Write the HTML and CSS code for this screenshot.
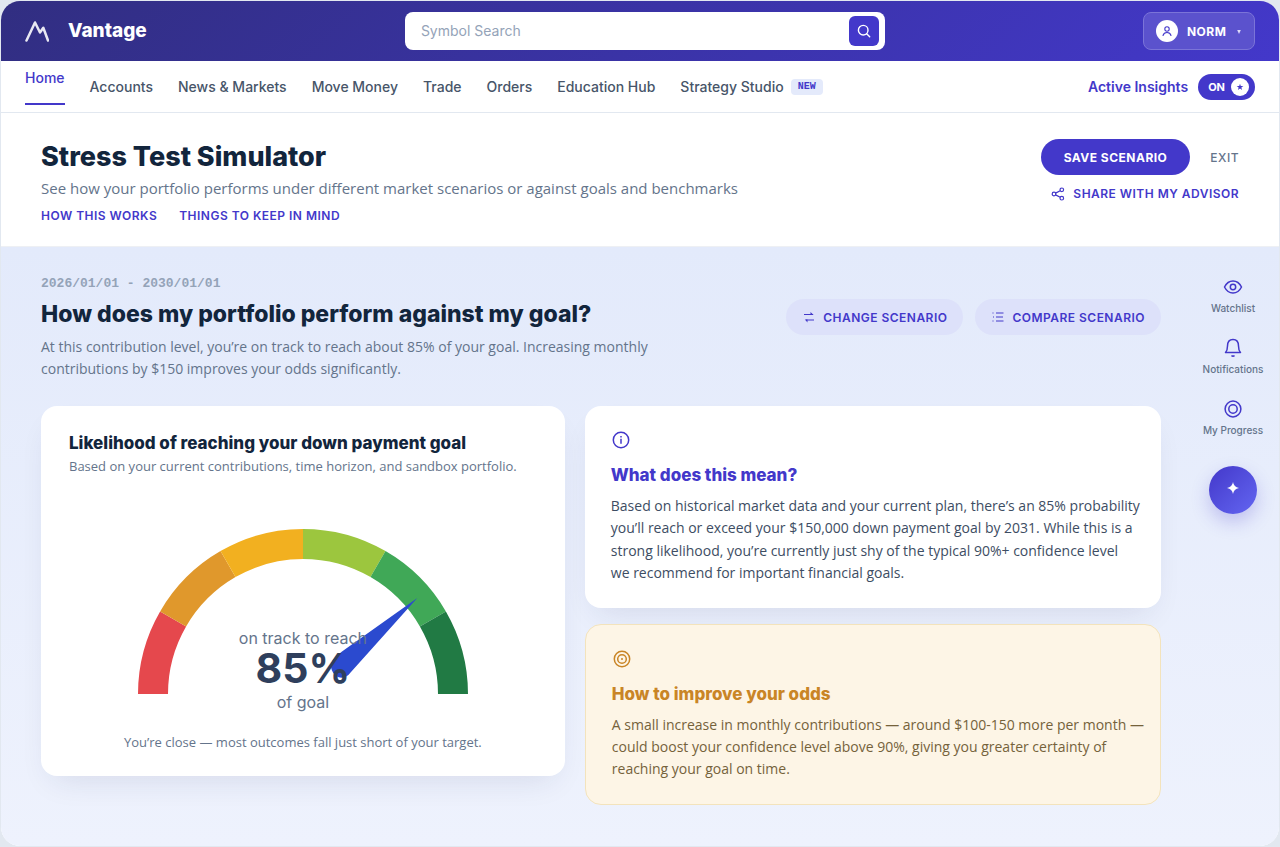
FILE: index.html
```html
<!DOCTYPE html>
<html lang="en">
<head>
<meta charset="utf-8">
<title>Vantage – Stress Test Simulator</title>
<link rel="stylesheet" href="styles.css">
</head>
<body>
<div class="app">
  <header class="topbar">
    <div class="brand">
      <svg class="brand-mark" viewBox="0 0 24 24" fill="none" stroke="currentColor" stroke-width="2.500" stroke-linecap="round" stroke-linejoin="round"><path d="M1.500 21.500 10 3.500l5 10 3.300-4.800L23 21.500"/></svg>
      <span class="brand-name">Vantage</span>
    </div>
    <form class="search">
      <input class="search-input" type="text" placeholder="Symbol Search" aria-label="Symbol Search">
      <button class="search-button" type="button" aria-label="Search">
        <svg viewBox="0 0 14 14" fill="none" stroke="currentColor" stroke-width="1.400" stroke-linecap="round"><circle cx="6.200" cy="6.200" r="4.800"/><path d="m9.700 9.700 3 3"/></svg>
      </button>
    </form>
    <button class="user" type="button">
      <span class="avatar"><svg viewBox="0 0 12 12" fill="none" stroke="currentColor" stroke-width="1.100" stroke-linecap="round"><circle cx="6" cy="4" r="2.200"/><path d="M2 10.500c.5-2 2-3 4-3s3.500 1 4 3"/></svg></span>
      <span class="user-name">NORM</span>
      <svg class="caret" viewBox="0 0 6 6" fill="currentColor"><path d="M1.200 2h3.600L3 6z"/></svg>
    </button>
  </header>

  <nav class="nav">
    <div class="nav-links">
      <a class="nav-link active" href="#">Home</a>
      <a class="nav-link" href="#">Accounts</a>
      <a class="nav-link" href="#">News &amp; Markets</a>
      <a class="nav-link" href="#">Move Money</a>
      <a class="nav-link" href="#">Trade</a>
      <a class="nav-link" href="#">Orders</a>
      <a class="nav-link" href="#">Education Hub</a>
      <a class="nav-link with-badge" href="#">Strategy Studio <span class="badge">NEW</span></a>
    </div>
    <div class="insights">
      <span class="insights-label" id="insights-label">Active Insights</span>
      <button class="toggle" type="button" role="switch" aria-checked="true" aria-labelledby="insights-label">ON
        <span class="toggle-knob"><svg viewBox="0 0 10 10" fill="currentColor"><path d="m5 .8 1 3h3.200L6.700 5.700l.9 3L5 6.900 2.400 8.700l.9-3L.8 3.800H4z"/></svg></span>
      </button>
    </div>
  </nav>

  <section class="page-head">
    <div class="page-intro">
      <h1 class="page-title">Stress Test Simulator</h1>
      <p class="page-sub">See how your portfolio performs under different market scenarios or against goals and benchmarks</p>
      <div class="page-links">
        <a class="caps-link" href="#">HOW THIS WORKS</a>
        <a class="caps-link" href="#">THINGS TO KEEP IN MIND</a>
      </div>
    </div>
    <div class="page-actions">
      <div class="action-row">
        <button class="save" type="button">SAVE SCENARIO</button>
        <button class="exit" type="button">EXIT</button>
      </div>
      <button class="share" type="button">
        <svg viewBox="0 0 14 14" fill="none" stroke="currentColor" stroke-width="1.200"><circle cx="10.800" cy="2.800" r="1.800"/><circle cx="3" cy="7" r="1.800"/><circle cx="10.800" cy="11.200" r="1.800"/><path d="m4.600 6.100 4.600-2.400M4.600 7.900l4.600 2.400"/></svg>
        SHARE WITH MY ADVISOR
      </button>
    </div>
  </section>

  <div class="body">
    <main class="main">
      <div class="scenario">
        <div class="scenario-text">
          <p class="period">2026/01/01 - 2030/01/01</p>
          <h2 class="question">How does my portfolio perform against my goal?</h2>
          <p class="answer">At this contribution level, you’re on track to reach about 85% of your goal. Increasing monthly contributions by $150 improves your odds significantly.</p>
        </div>
        <div class="scenario-actions">
          <button class="soft-button" type="button">
            <svg viewBox="0 0 14 14" fill="none" stroke="currentColor" stroke-width="1.200"><path d="M2 4.500h9M4 10h8"/><path d="M8.500 2v3h3.200zM5.500 12.500v-3H2.800z" fill="currentColor" stroke="none"/></svg>
            CHANGE SCENARIO
          </button>
          <button class="soft-button" type="button">
            <svg viewBox="0 0 14 14" fill="none" stroke="currentColor" stroke-width="1"><path d="M5 3h7.500M5 7h7M5 11h7.500M1.500 3h1M2 7h1M1.500 11h1"/></svg>
            COMPARE SCENARIO
          </button>
        </div>
      </div>

      <div class="cards">
        <section class="card gauge-card">
          <h3 class="card-title">Likelihood of reaching your down payment goal</h3>
          <p class="card-sub">Based on your current contributions, time horizon, and sandbox portfolio.</p>
          <div class="gauge">
            <svg class="gauge-art" viewBox="0 0 330 165" fill="none" stroke-width="30">
              <path stroke="#e5484d" d="M15 165A150 150 0 0 1 35.100 90"/>
              <path stroke="#e0982c" d="M35.100 90A150 150 0 0 1 90 35.100"/>
              <path stroke="#f2b020" d="M90 35.100A150 150 0 0 1 165 15"/>
              <path stroke="#9cc63e" d="M165 15A150 150 0 0 1 240 35.100"/>
              <path stroke="#40a857" d="M240 35.100A150 150 0 0 1 294.900 90"/>
              <path stroke="#217a44" d="M294.900 90A150 150 0 0 1 315 165"/>
              <path fill="#2b4acf" stroke="none" d="M279.300 69 204 122.500Q192 131 193 138q1 7 7 10 7 3 13-5z"/>
            </svg>
            <div class="gauge-text">
              <span class="gauge-label">on track to reach</span>
              <strong class="gauge-value">85%</strong>
              <span class="gauge-label">of goal</span>
            </div>
          </div>
          <p class="gauge-note">You’re close — most outcomes fall just short of your target.</p>
        </section>

        <div class="side-cards">
          <section class="card info-card">
            <svg class="card-icon" viewBox="0 0 20 20" fill="none" stroke="currentColor" stroke-width="1.500"><circle cx="10" cy="10" r="7.700"/><path d="M10 8.800v5M10 6v1.500"/></svg>
            <h3 class="info-title">What does this mean?</h3>
            <p class="info-copy">Based on historical market data and your current plan, there’s an 85% probability you’ll reach or exceed your $150,000 down payment goal by 2031. While this is a strong likelihood, you’re currently just shy of the typical 90%+ confidence level we&nbsp;recommend for important financial goals.</p>
          </section>
          <section class="card tip-card">
            <svg class="card-icon" viewBox="0 0 20 20" fill="none" stroke="currentColor" stroke-width="1.500"><circle cx="10" cy="10" r="7.700"/><circle cx="10" cy="10" r="4.300"/><circle cx="10" cy="10" r="1" fill="currentColor" stroke="none"/></svg>
            <h3 class="info-title">How to improve your odds</h3>
            <p class="info-copy">A small increase in monthly contributions — around $100-150 more per month — could boost your confidence level above 90%, giving you greater certainty of reaching your goal on time.</p>
          </section>
        </div>
      </div>
    </main>

    <aside class="rail">
      <button class="rail-item" type="button">
        <svg viewBox="0 0 20 20" fill="none" stroke="currentColor" stroke-width="1.500"><path d="M1.500 10C3.500 6 6.500 4 10 4s6.500 2 8.500 6c-2 4-5 6-8.500 6s-6.500-2-8.500-6z"/><circle cx="10" cy="10" r="2.700"/></svg>
        Watchlist
      </button>
      <button class="rail-item" type="button">
        <svg viewBox="0 0 20 20" fill="none" stroke="currentColor" stroke-width="1.500" stroke-linejoin="round"><path d="M2.500 14.500h15c-1.500-1.500-2-3-2-6.500 0-4-2-6.500-5.500-6.500S4.500 4 4.500 8c0 3.500-.5 5-2 6.500zM8.500 17.500c.8.900 2.200.9 3 0"/></svg>
        Notifications
      </button>
      <button class="rail-item" type="button">
        <svg viewBox="0 0 20 20" fill="none" stroke="currentColor" stroke-width="1.500"><circle cx="10" cy="10" r="7.900"/><circle cx="10" cy="10" r="4.200"/></svg>
        My Progress
      </button>
      <button class="assistant" type="button" aria-label="Assistant">
        <svg viewBox="0 0 12 12" fill="currentColor"><path d="M6 0q.8 5.200 6 6-5.200.8-6 6-.8-5.200-6-6 5.200-.8 6-6z"/></svg>
      </button>
    </aside>
  </div>
</div>
</body>
</html>
```
FILE: styles.css
```css
:root {
  --indigo: #4338ca;
  --ink: #12253c;
  --slate: #64748b;
  --line: #e2e8f0;
  --copy: "Open Sans", sans-serif;
}

* { box-sizing: border-box; }

body {
  margin: 0;
  background: #e2e8f0;
  font-family: Inter, "Liberation Sans", sans-serif;
  color: var(--ink);
}

h1, h2, h3, p { margin: 0; }

a { text-decoration: none; }

button {
  border: 0;
  padding: 0;
  background: none;
  font: inherit;
  cursor: pointer;
}

svg { display: block; flex: none; }

.app {
  display: flex;
  flex-direction: column;
  min-height: 100vh;
  border: 1px solid var(--line);
  border-radius: 20px;
  overflow: hidden;
  background: #fff;
}

/* Top bar */
.topbar {
  display: flex;
  align-items: center;
  justify-content: space-between;
  height: 60px;
  padding: 0 24px;
  background: linear-gradient(135deg, #312e81, #4338ca);
  color: #fff;
}

.brand { display: flex; align-items: center; gap: 19px; }
.brand-mark { width: 24px; height: 24px; color: #e8e8f2; }
.brand-name { font-size: 19px; line-height: 24px; font-weight: 800; }

.search {
  display: flex;
  align-items: center;
  width: 480px;
  height: 38px;
  padding: 0 6px 0 16px;
  border-radius: 8px;
  background: #fff;
}

.search-input {
  flex: 1;
  min-width: 0;
  padding: 0;
  border: 0;
  outline: 0;
  background: none;
  font: 400 14px/20px Inter, "Liberation Sans", sans-serif;
  color: var(--ink);
}

.search-input::placeholder { color: #94a3b8; }

.search-button {
  display: grid;
  place-items: center;
  width: 30px;
  height: 30px;
  border-radius: 6px;
  background: var(--indigo);
  color: #fff;
}

.search-button svg { width: 14px; height: 14px; }

.user {
  display: flex;
  align-items: center;
  gap: 9px;
  width: 112px;
  height: 38px;
  padding: 0 12px;
  border: 1px solid #7b74d8;
  border-radius: 8px;
  background: #5b52cd;
  color: #fff;
}

.avatar {
  display: grid;
  place-items: center;
  width: 22px;
  height: 22px;
  border-radius: 50%;
  background: #fff;
  color: var(--indigo);
}

.avatar svg { width: 12px; height: 12px; }
.user-name { font-size: 12px; font-weight: 700; letter-spacing: 0.04em; }
.caret { width: 6px; height: 6px; margin-left: auto; color: #dedbf7; }

/* Navigation */
.nav {
  display: flex;
  align-items: center;
  justify-content: space-between;
  height: 52px;
  padding: 0 24px;
  border-bottom: 1px solid var(--line);
}

.nav-links { display: flex; align-items: center; gap: 25px; }

.nav-link {
  font-size: 14px;
  line-height: 20px;
  font-weight: 500;
  color: #475569;
}

.nav-link.active {
  padding-bottom: 15px;
  border-bottom: 2px solid var(--indigo);
  color: var(--indigo);
}

.with-badge { display: flex; align-items: center; gap: 7px; }

.badge {
  padding: 0 7px;
  border-radius: 4px;
  background: #e4eafb;
  font: 700 10px/16px "Liberation Mono", monospace;
  color: var(--indigo);
}

.insights { display: flex; align-items: center; gap: 10px; }
.insights-label { font-size: 14px; font-weight: 600; color: var(--indigo); }

.toggle {
  display: flex;
  align-items: center;
  gap: 6px;
  height: 26px;
  padding: 0 6px 0 10px;
  border-radius: 13px;
  background: var(--indigo);
  font-size: 11px;
  font-weight: 700;
  color: #fff;
}

.toggle-knob {
  display: grid;
  place-items: center;
  width: 18px;
  height: 18px;
  border-radius: 50%;
  background: #fff;
  color: var(--indigo);
}

.toggle-knob svg { width: 8px; height: 8px; }

/* Page heading */
.page-head {
  display: flex;
  justify-content: space-between;
  padding: 26px 40px 21px;
  border-bottom: 1px solid #eef0f4;
}

.page-title { font-size: 27px; line-height: 36px; font-weight: 800; }
.page-sub { margin-top: 1px; font: 400 15px/24px var(--copy); color: var(--slate); }
.page-links { display: flex; gap: 22px; margin-top: 7px; }

.caps-link {
  font-size: 12px;
  line-height: 18px;
  font-weight: 600;
  letter-spacing: 0.04em;
  color: var(--indigo);
}

.page-actions { display: flex; flex-direction: column; align-items: flex-end; gap: 10px; }
.action-row { display: flex; align-items: center; gap: 20px; }

.save {
  height: 36px;
  padding: 0 23px;
  border-radius: 18px;
  background: var(--indigo);
  font-size: 12px;
  font-weight: 700;
  letter-spacing: 0.04em;
  color: #fff;
}

.exit { font-size: 12px; font-weight: 500; letter-spacing: 0.04em; color: var(--slate); }

.share {
  display: flex;
  align-items: center;
  gap: 8px;
  font-size: 12px;
  line-height: 18px;
  font-weight: 600;
  letter-spacing: 0.04em;
  color: var(--indigo);
}

.share svg { width: 14px; height: 14px; }

/* Content */
.body {
  display: flex;
  flex: 1;
  gap: 42px;
  padding: 27px 16px 40px 40px;
  background: linear-gradient(#e3eafb, #eef2fd);
}

.main { flex: 1; min-width: 0; }
.scenario { display: flex; align-items: center; justify-content: space-between; }
.scenario-text { max-width: 640px; }

.period {
  font: 700 13px/20px "Liberation Mono", monospace;
  color: #94a3b8;
}

.question { margin-top: 4px; font-size: 23px; line-height: 32px; font-weight: 800; }
.answer { margin-top: 6px; font: 400 14px/22px var(--copy); color: var(--slate); }
.scenario-actions { display: flex; flex: none; gap: 12px; padding-bottom: 20px; }

.soft-button {
  display: flex;
  align-items: center;
  gap: 7px;
  height: 36px;
  padding: 0 16px;
  border-radius: 18px;
  background: #dde1fa;
  font-size: 12px;
  font-weight: 600;
  letter-spacing: 0.04em;
  color: var(--indigo);
}

.soft-button svg { width: 14px; height: 14px; }

.cards {
  display: grid;
  grid-template-columns: 10fr 11fr;
  align-items: start;
  gap: 20px;
  margin-top: 26px;
}

.card {
  border-radius: 16px;
  background: #fff;
  box-shadow: 0 14px 32px -12px rgba(30, 41, 80, 0.12);
}

.gauge-card { padding: 25px 28px 24px; }
.card-title { font-size: 17px; line-height: 25px; font-weight: 800; }
.card-sub { font: 400 13px/20px var(--copy); color: var(--slate); }

.gauge {
  position: relative;
  width: 330px;
  margin: 53px auto 0;
  padding-bottom: 20px;
}

.gauge-art { width: 100%; }

.gauge-text {
  position: absolute;
  inset: auto 0 0;
  display: flex;
  flex-direction: column;
  align-items: center;
}

.gauge-label { font-size: 16px; line-height: 24px; color: var(--slate); }
.gauge-value { margin-bottom: 4px; font-size: 41px; line-height: 36px; font-weight: 700; color: #2f3f5c; }
.gauge-note { margin-top: 18px; font: 400 13px/20px var(--copy); text-align: center; color: var(--slate); }

.side-cards { display: grid; gap: 16px; }
.info-card, .tip-card { padding: 24px 14px 23px 26px; }
.card-icon { width: 20px; height: 20px; }
.info-card { color: var(--indigo); }
.info-title { margin-top: 13px; font-size: 17px; line-height: 25px; font-weight: 800; }
.info-copy { margin-top: 7px; font: 400 14px/1.6 var(--copy); color: #3d4d63; }
.tip-card { border: 1px solid #f3e3bc; background: #fdf5e6; box-shadow: none; color: #c98526; }
.tip-card .info-copy { color: #75623b; }

/* Side rail */
.rail { display: flex; flex-direction: column; align-items: center; gap: 23px; width: 60px; padding-top: 3px; }

.rail-item {
  display: flex;
  flex-direction: column;
  align-items: center;
  gap: 4px;
  font-size: 10px;
  line-height: 14px;
  font-weight: 500;
  white-space: nowrap;
  color: var(--slate);
}

.rail-item svg { width: 20px; height: 20px; color: var(--indigo); }

.assistant {
  display: grid;
  place-items: center;
  width: 48px;
  height: 48px;
  margin-top: 6px;
  border-radius: 50%;
  background: linear-gradient(135deg, #4338ca, #6366f1);
  box-shadow: 0 8px 18px rgba(67, 56, 202, 0.25);
  color: #fff;
}

.assistant svg { width: 12px; height: 12px; margin-bottom: 4px; }
```
